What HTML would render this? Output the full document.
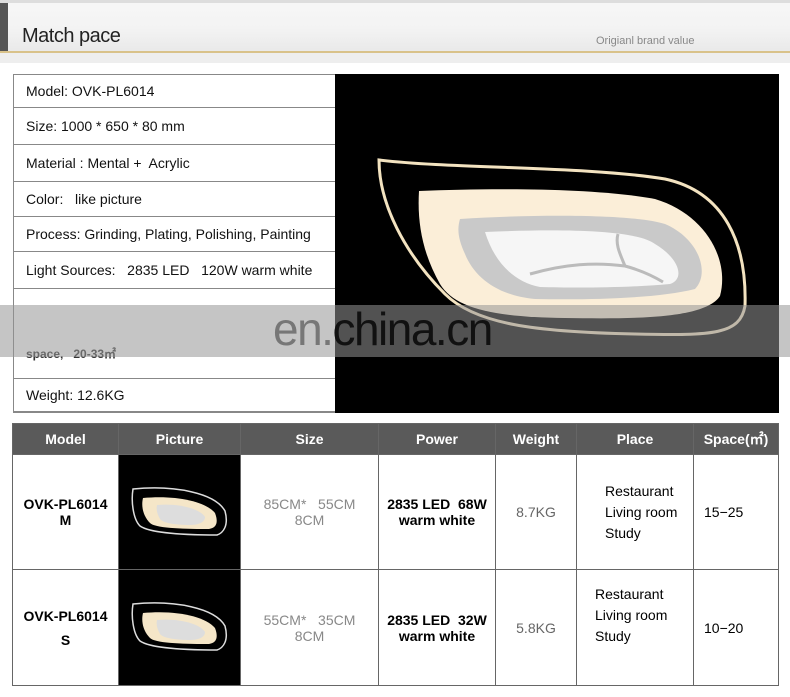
<!DOCTYPE html>
<html><head><meta charset="utf-8"><style>
*{margin:0;padding:0;box-sizing:border-box}
body{width:790px;height:697px;background:#fff;position:relative;overflow:hidden;font-family:"Liberation Sans",sans-serif;}
.a{position:absolute}
.row{position:absolute;left:13px;width:322px;border-top:1px solid #888;font-size:14px;color:#111;padding-left:13px;display:flex;align-items:center}
td,th{border:1px solid #666;text-align:center;font-size:14px}
th{background:#5a5a5a;color:#fff;font-weight:bold;font-size:14px}
</style></head><body>
<div class="a" style="left:0;top:0;width:790px;height:52px;background:linear-gradient(#f7f7f7,#f3f3f3 55%,#e9e9e9)"></div>
<div class="a" style="left:0;top:0;width:8px;height:52px;background:#555"></div>
<div class="a" style="left:0;top:0;width:790px;height:3px;background:#ddd"></div>
<div class="a" style="left:0;top:51px;width:790px;height:2px;background:#d9c28a"></div>
<div class="a" style="left:0;top:53px;width:790px;height:10px;background:#eee"></div>
<div class="a" style="left:22px;top:25px;font-size:20px;color:#222;letter-spacing:-0.5px">Match pace</div>
<div class="a" style="left:596px;top:35px;font-size:11px;color:#888">Origianl brand value</div>

<div class="a" style="left:13px;top:74px;width:323px;height:339px;border:1px solid #888;border-right:none"></div>
<div class="row" style="top:74px;height:33px;border-top:none">Model: OVK-PL6014</div>
<div class="row" style="top:107px;height:37px">Size: 1000 * 650 * 80 mm</div>
<div class="row" style="top:144px;height:37px">Material : Mental +&nbsp; Acrylic</div>
<div class="row" style="top:181px;height:35px">Color:&nbsp;&nbsp; like picture</div>
<div class="row" style="top:216px;height:35px">Process: Grinding, Plating, Polishing, Painting</div>
<div class="row" style="top:251px;height:37px">Light Sources:&nbsp;&nbsp; 2835 LED&nbsp;&nbsp; 120W warm white</div>
<div class="row" style="top:288px;height:90px;align-items:flex-end;padding-bottom:16px;font-size:12px;font-weight:bold;color:#333">space,&nbsp;&nbsp; 20-33㎡</div>
<div class="row" style="top:378px;height:34px;border-bottom:1px solid #888">Weight: 12.6KG</div>

<div class="a" style="left:335px;top:74px;width:444px;height:339px;background:#000;overflow:hidden">
<svg width="444" height="339" viewBox="0 0 444 339">
<path d="M44 86 C120 95 250 92 330 105 C390 118 412 170 410 232 C405 260 380 262 300 260 C200 258 140 250 110 220 C70 180 44 130 44 86Z" fill="#000" stroke="#f3e3c0" stroke-width="3"/>
<path d="M84 117 C160 114 260 114 320 125 C370 140 395 185 385 222 C370 245 300 245 230 244 C160 243 120 235 105 210 C88 180 82 150 84 117Z" fill="#fbeed8"/>
<path d="M125 145 C200 140 300 140 330 150 C365 165 375 200 360 215 C320 225 250 226 200 225 C165 222 140 205 130 180 C123 165 122 155 125 145Z" fill="#c9c9c9"/>
<path d="M150 158 C220 155 300 155 320 170 C345 185 350 205 335 210 C290 214 240 214 205 213 C180 208 160 190 150 158Z" fill="#f6f6f6"/>
<path d="M195 200 C230 190 260 188 290 192 C305 196 318 202 328 208 M290 192 C285 180 280 170 283 160" fill="none" stroke="#bbb" stroke-width="3"/>
</svg></div>

<div class="a" style="left:0;top:305px;width:790px;height:52px;background:rgba(150,150,150,0.55)"></div>
<div class="a" style="left:273px;top:302px;font-size:46px;color:#111;letter-spacing:-1.5px"><span style="color:#777">en.</span>china.cn</div>

<table class="a" style="left:12px;top:423px;width:767px;border-collapse:collapse">
<tr style="height:31px"><th style="width:106px">Model</th><th style="width:122px">Picture</th><th style="width:138px">Size</th><th style="width:117px">Power</th><th style="width:81px">Weight</th><th style="width:117px">Place</th><th>Space(㎡)</th></tr>
<tr style="height:115px"><td style="font-weight:bold">OVK-PL6014<br>M</td><td style="background:#000"><svg width="110" height="60" viewBox="0 0 110 60"><path d="M8 8 C50 4 90 12 100 30 C104 45 98 52 92 54 C60 54 25 52 15 45 C8 38 6 20 8 8Z" fill="none" stroke="#ddd" stroke-width="1.5"/><path d="M18 17 C50 14 80 20 90 32 C95 45 88 48 82 48 C55 48 30 47 25 42 C18 35 16 25 18 17Z" fill="#f5e6c8"/><path d="M32 24 C55 22 75 28 80 36 C80 42 72 44 65 44 C50 44 38 42 35 38 C32 33 31 28 32 24Z" fill="#ddd"/></svg></td><td style="color:#888">85CM*&nbsp;&nbsp; 55CM<br>8CM</td><td style="font-weight:bold">2835 LED&nbsp; 68W<br>warm white</td><td style="color:#666">8.7KG</td><td style="text-align:left;padding-left:28px;line-height:21px">Restaurant<br>Living room<br>Study</td><td style="text-align:left;padding-left:10px">15−25</td></tr>
<tr style="height:116px"><td style="font-weight:bold;line-height:24px">OVK-PL6014<br>S</td><td style="background:#000"><svg width="110" height="60" viewBox="0 0 110 60"><path d="M8 8 C50 4 90 12 100 30 C104 45 98 52 92 54 C60 54 25 52 15 45 C8 38 6 20 8 8Z" fill="none" stroke="#ddd" stroke-width="1.5"/><path d="M18 17 C50 14 80 20 90 32 C95 45 88 48 82 48 C55 48 30 47 25 42 C18 35 16 25 18 17Z" fill="#f5e6c8"/><path d="M32 24 C55 22 75 28 80 36 C80 42 72 44 65 44 C50 44 38 42 35 38 C32 33 31 28 32 24Z" fill="#ddd"/></svg></td><td style="color:#888">55CM*&nbsp;&nbsp; 35CM<br>8CM</td><td style="font-weight:bold">2835 LED&nbsp; 32W<br>warm white</td><td style="color:#666">5.8KG</td><td style="text-align:left;padding-left:18px;line-height:21px;vertical-align:top;padding-top:14px">Restaurant<br>Living room<br>Study</td><td style="text-align:left;padding-left:10px">10−20</td></tr>
</table>
</body></html>
